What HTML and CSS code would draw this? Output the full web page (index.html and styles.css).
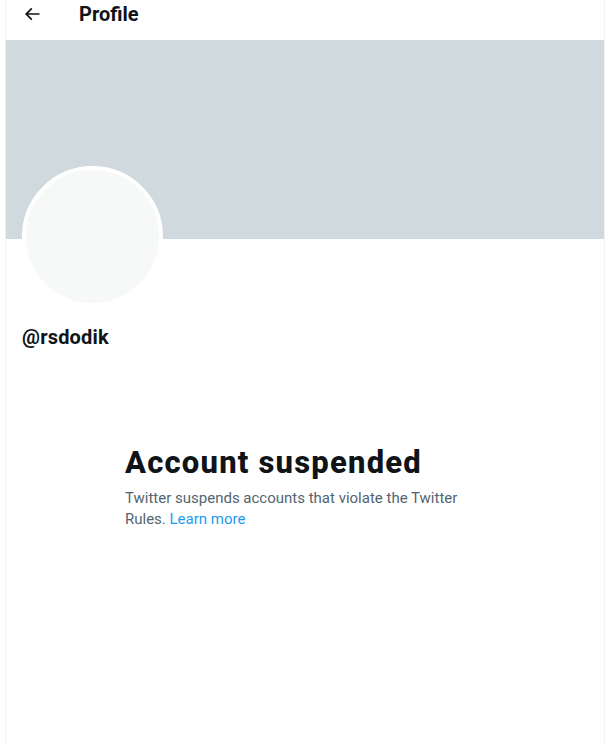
FILE: index.html
```html
<!DOCTYPE html>
<html lang="en">
  <head>
    <meta charset="UTF-8" />
    <meta name="viewport" content="width=device-width, initial-scale=1.0" />
    <title>Profile</title>
    <link rel="stylesheet" href="styles.css">
  </head>
  <body>
    <main class="column">
      <header class="top-bar">
        <button class="back-btn" aria-label="Back">
          <svg viewBox="0 0 24 24" width="20" height="20">
            <path d="M7.414 13l5.043 5.04-1.414 1.42L3.586 12l7.457-7.46 1.414 1.42L7.414 11H21v2H7.414z"></path>
          </svg>
        </button>
        <h2>Profile</h2>
      </header>

      <div class="banner"></div>

      <div class="profile-info">
        <div class="avatar"></div>
        <div class="handle">@rsdodik</div>
      </div>

      <div class="empty-state">
        <h1>Account suspended</h1>
        <p>Twitter suspends accounts that violate the Twitter Rules. <a href="#">Learn more</a></p>
      </div>
    </main>
  </body>
</html>
```

FILE: styles.css
```css
* {
  margin: 0;
  padding: 0;
  box-sizing: border-box;
  font-family: "Segoe UI", Roboto, "Liberation Sans", sans-serif;
}

body {
  background: #ffffff;
  color: #0f1419;
}

.column {
  width: 600px;
  min-height: 100vh;
  margin-left: 5px;
  border-left: 1px solid #eff3f4;
  border-right: 1px solid #eff3f4;
}

.top-bar {
  height: 40px;
  display: flex;
  align-items: flex-start;
  padding: 4px 16px 0 16px;
}

.back-btn {
  background: none;
  border: none;
  width: 20px;
  height: 20px;
  margin-right: 37px;
  cursor: pointer;
}

.back-btn svg {
  display: block;
  fill: #0f1419;
}

.top-bar h2 {
  font-size: 20px;
  font-weight: 700;
  line-height: 20px;
}

.banner {
  height: 199px;
  background: #cfd9de;
}

.profile-info {
  padding: 0 16px;
}

.avatar {
  width: 141px;
  height: 141px;
  margin-top: -73px;
  border-radius: 50%;
  border: 4px solid #ffffff;
  background: #f7f9f9;
}

.handle {
  margin-top: 18px;
  font-size: 20px;
  font-weight: 700;
  line-height: 24px;
  letter-spacing: 0.2px;
}

.empty-state {
  max-width: 400px;
  margin: 96px auto 0;
  padding: 0 20px;
}

.empty-state h1 {
  font-size: 31px;
  font-weight: 800;
  line-height: 36px;
  letter-spacing: 1.2px;
  margin-bottom: 7px;
}

.empty-state p {
  font-size: 15px;
  line-height: 21px;
  color: #536471;
}

.empty-state a {
  color: #1d9bf0;
  text-decoration: none;
}
```
